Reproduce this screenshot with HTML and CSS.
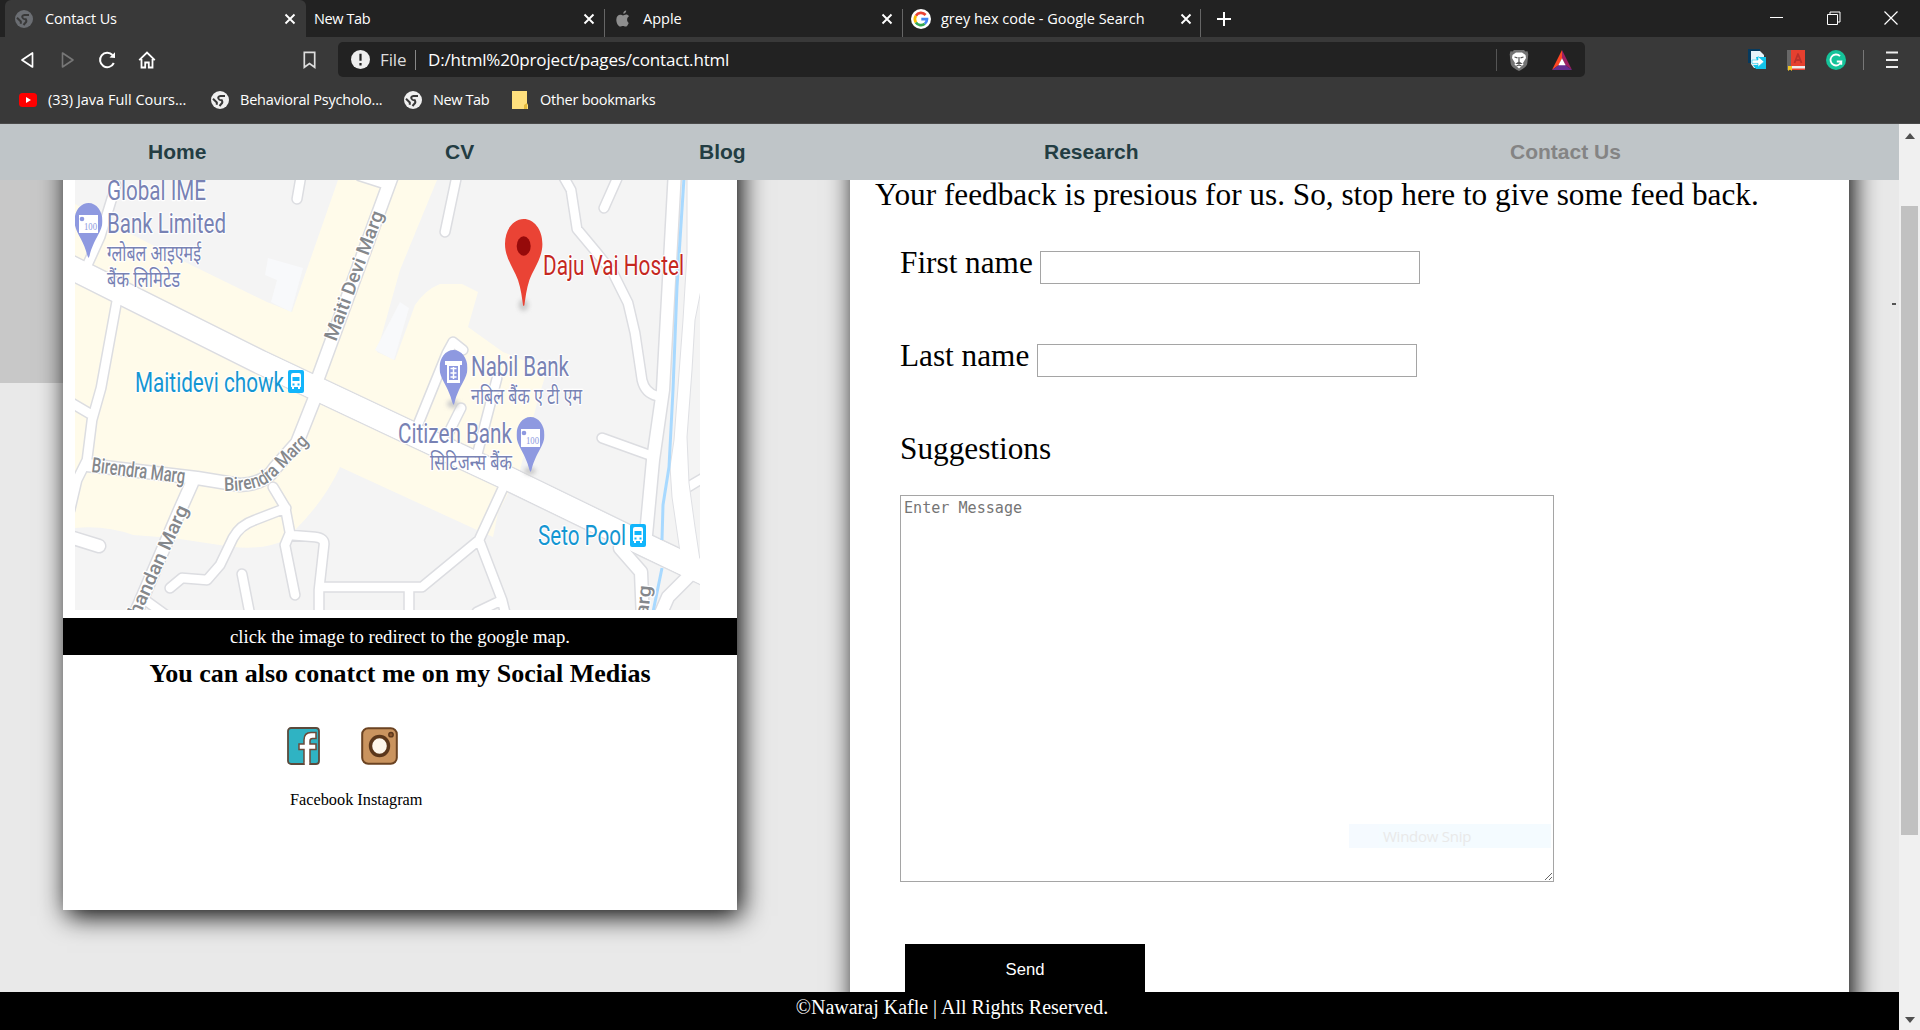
FILE: index.html
```html
<!DOCTYPE html>
<html lang="en">
<head>
<meta charset="utf-8">
<title>Contact Us</title>
<link rel="stylesheet" href="styles.css">
</head>
<body>
<svg class="defs" width="0" height="0" aria-hidden="true">
  <symbol id="globe" viewBox="0 0 18 18"><circle cx="9" cy="9" r="9" fill="currentColor"/><path d="M14 5H9.500Q6.600 5.500 7.400 7.500T10.800 9.300Q12 11.500 10.600 12.600L8.500 15M2 7.800l3.800 3.600v2.300" fill="none" stroke="#393939" stroke-width="2"/></symbol>
  <symbol id="close" viewBox="0 0 12 12"><path d="M1.500 1.500l9 9M10.500 1.500l-9 9" stroke="#fff" stroke-width="1.900" fill="none"/></symbol>
  <symbol id="bus" viewBox="0 0 16 23"><rect width="16" height="23" rx="2" fill="#12b5fb"/><path d="M3 5q0-2 2-2h6q2 0 2 2v12h-1v2h-2v-2H6v2H4v-2H3z" fill="#fff"/><path d="M4.500 7h7v4h-7zM4.500 13.500h2v2h-2zM9.500 13.500h2v2h-2z" fill="#12b5fb"/></symbol>
  <symbol id="pin" viewBox="0 0 28 55"><path d="M14 0C6 0 0 8 0 18c0 11 9 18 13 35l1 2 1-2c4-17 13-24 13-35C28 8 22 0 14 0z" fill="#8e99e0"/></symbol>
  <defs>
    <path id="roads" d="M117 300L101 388 92 420 87 460 77 480 70 510M70 402L92 415M302 170L297 199M458 170L445 232M562 174L571 190 577 229 597 253 613 273 628 303 635 333 642 380Q645 393 657 396M620 172L604 208M602 438L652 456M503 488L479 540 422 587H323M479 540L502 600 507 620M477 612L502 600M409 588V615M273 487L285 507 290 533 285 545 295 595M290 535L315 537Q325 538 324 545L319 590V620M286 508L255 520Q240 525 233 538L220 565 207 580 182 578 170 588M242 574L251 620M463 350L453 342 447 353 419 422M461 408L449 432M497 378L477 455M116 185L100 237 86 268M145 600L170 618M360 176L385 184M688 487L705 477"/>
    <path id="lanes" d="M87 465L197 478 240 485Q265 484 275 468L297 443 320 385M318 378L396 165M192 483L180 510 135 615M70 537L99 546M675 170L663 390 653 460 646 535M620 548L641 572 643 620M690 575L668 597 658 620"/>
    <path id="main" d="M60 262L120 292 260 362 400 428 507 478 647 546 710 576"/>
  </defs>
</svg>

<header class="browser">
  <div class="tabs">
    <div class="tab active"><svg class="fav dim"><use href="#globe"/></svg><span class="title">Contact Us</span><svg class="x"><use href="#close"/></svg></div>
    <div class="tab plain"><span class="title">New Tab</span><svg class="x"><use href="#close"/></svg></div>
    <div class="tab apple"><svg class="fav" viewBox="0 0 18 18"><path d="M12.200.5c.1 1.700-1.300 3.300-2.900 3.300C9.100 2.100 10.600.7 12.200.5zM14.700 12.900c-.9 2.200-1.900 3.700-3.200 3.700-1 0-1.400-.6-2.600-.6s-1.700.6-2.600.6C4.400 16.600 2.300 13 2.300 9.700c0-3.300 2-5 4-5 1.100 0 2 .7 2.700.7.800 0 1.800-.8 3.200-.8 1 0 2.100.5 2.800 1.600-2.700 1.700-2.200 5.400-.3 6.700z" fill="#8e8e8e"/></svg><span class="title">Apple</span><svg class="x"><use href="#close"/></svg></div>
    <div class="tab google"><svg class="fav" viewBox="0 0 20 20"><circle cx="10" cy="10" r="10" fill="#fff"/><g fill="none" stroke-width="2.700"><path d="M14.600 6A6.100 6.100 0 0 0 4.900 6.700" stroke="#ea4335"/><path d="M4.900 6.700a6.100 6.100 0 0 0 0 6.700" stroke="#fbbc05"/><path d="M4.900 13.400a6.100 6.100 0 0 0 8.900 1.400" stroke="#34a853"/><path d="M13.800 14.800A6 6 0 0 0 16 10.200h-5.700" stroke="#4285f4"/></g></svg><span class="title">grey hex code - Google Search</span><svg class="x"><use href="#close"/></svg></div>
    <svg class="plus" viewBox="0 0 14 14"><path d="M7 0v14M0 7h14" stroke="#fff" stroke-width="2"/></svg>
    <div class="window-buttons">
      <svg viewBox="0 0 14 14"><path d="M0 6.500h13" stroke="#fff"/></svg>
      <svg viewBox="0 0 14 14" fill="none" stroke="#fff"><path d="M.5 3.500h10v10H.500zM3 3V1h10v10h-2.500"/></svg>
      <svg viewBox="0 0 14 14"><path d="M.5 .5l13 13M13.500.5l-13 13" stroke="#fff" stroke-width="1.200"/></svg>
    </div>
  </div>
  <div class="toolbar">
    <div class="controls">
      <svg class="i-back" viewBox="0 0 14 18"><path d="M12.500 2v14L2 9z" fill="none" stroke="#fff" stroke-width="1.700" stroke-linejoin="round"/></svg>
      <svg class="i-fwd" viewBox="0 0 14 18"><path d="M1.500 2v14L12 9z" fill="none" stroke="#777" stroke-width="1.600" stroke-linejoin="round"/></svg>
      <svg class="i-reload" viewBox="0 0 18 18"><path d="M14.500 4A7.200 7.200 0 1 0 15.800 12" fill="none" stroke="#fff" stroke-width="2"/><path d="M11.500 6.500l5.500.5V1.200z" fill="#fff"/></svg>
      <svg class="i-home" viewBox="0 0 18 18"><path d="M1.200 9.200L9 1.500l7.800 7.700M3.500 8v8.500h3.700v-5h3.600v5h3.700V8" fill="none" stroke="#fff" stroke-width="1.800"/></svg>
      <svg class="i-mark" viewBox="0 0 13 18"><path d="M1.300 1.300h10.400v15L6.500 12.500l-5.200 3.800z" fill="none" stroke="#ddd" stroke-width="1.700"/></svg>
    </div>
    <div class="address">
      <svg class="info" viewBox="0 0 19 19"><circle cx="9.500" cy="9.500" r="9.500" fill="#eee"/><path d="M9.500 3.800v7M9.500 13v2.400" stroke="#222" stroke-width="2.200"/></svg>
      <span class="scheme">File</span>
      <span class="url">D:/html%20project/pages/contact.html</span>
      <div class="shields">
        <svg viewBox="0 0 20 22"><path d="M5 1h10l1.500 1.500 2-.3.800 3-1 9.300c-.3 3-4.500 5.500-8.300 7.500-3.800-2-8-4.500-8.300-7.500L.7 5.200l.8-3 2 .3z" fill="#737373"/><path d="M7 3.500h6l3.500 2.500.5 3-3 5 .5 1.500-4.500 4-4.500-4L6 14 3 9l.5-3z" fill="#fff"/><path d="M5.500 8l3 .8M14.500 8l-3 .8M10 8v5l-2 1.500h4L10 13M7.500 17l2.500-1 2.500 1" stroke="#555" fill="none" stroke-width="1.200"/></svg>
        <svg viewBox="0 0 22 22"><path d="M11 0L0 22l7.500-5.500L11 9z" fill="#ff4724"/><path d="M11 0l11 22-7.500-5.500L11 9z" fill="#9e1f63"/><path d="M0 22h22l-7.500-5.500h-7z" fill="#662d91"/><path d="M11 9l4 7.800H7z" fill="#fff"/></svg>
      </div>
    </div>
    <div class="extensions">
      <svg viewBox="0 0 18 22"><path d="M0 0h12v3L6 14H0z" fill="#063a5e"/><path d="M3 2h9l4 4v13H6l-3-4z" fill="#e9f4fa"/><path d="M8 8h10v12H8l-3-4h5z" fill="#12c4ea"/><path d="M4 11h6V7.500l6 5.200-6 5.200v-3.500H4z" fill="#fff" stroke="#12c4ea" stroke-width=".6"/></svg>
      <svg viewBox="0 0 18 22"><path d="M0 1h18v20H0z" fill="#e5402f"/><path d="M0 1h4v20H0z" fill="#686868"/><path d="M4 17h14v2.500H4z" fill="#eee"/><path d="M1 17h4v5l-2-1.500L1 22z" fill="#f3c623"/><path d="M7.500 14L11 5l3.500 9M9 11h4" stroke="#b9302a" fill="none" stroke-width="1.800" stroke-linejoin="round"/></svg>
      <svg class="gram" viewBox="0 0 20 20"><circle cx="10" cy="10" r="10" fill="#15c39a"/><path d="M14 6.200A5.500 5.500 0 1 0 15.300 11.500H10.800M15.300 11v3.800" fill="none" stroke="#fff" stroke-width="1.800"/></svg>
      <i class="divider"></i>
      <svg class="menu" viewBox="0 0 12 18"><path d="M0 1.500h12M0 9h12M0 16h12" stroke="#eee" stroke-width="2"/></svg>
    </div>
  </div>
  <div class="bookmarks">
    <a><svg class="yt" viewBox="0 0 18 14"><rect width="18" height="14" rx="3.500" fill="#f00"/><path d="M7 4v6l5-3z" fill="#fff"/></svg><span class="b1">(33) Java Full Cours...</span></a>
    <a><svg class="fav"><use href="#globe"/></svg><span class="b2">Behavioral Psycholo...</span></a>
    <a><svg class="fav"><use href="#globe"/></svg><span class="b3">New Tab</span></a>
    <a><svg class="folder" viewBox="0 0 16 18"><path d="M0 0h15v12l1 2v4H0z" fill="#ffe07d"/><path d="M12 18v-4l3-2v6z" fill="#e3b93d"/></svg><span class="b4">Other bookmarks</span></a>
  </div>
</header>

<div class="viewport">
  <div class="page">
    <nav class="nav"><a>Home</a><a>CV</a><a>Blog</a><a>Research</a><a class="current">Contact Us</a></nav>
    <main class="content">
      <section class="card location">
        <svg class="map" viewBox="75 180 625 430">
          <rect x="75" y="180" width="625" height="430" fill="#f4f4f4"/>
          <path fill="#fffbea" d="M75 204L133 235 187 263 267 302 292 312 338 180H437L400 270 377 352 395 360 415 305 Q425 290 440 284H462L478 292 468 327 503 352 547 370 537 403 520 470 498 513 493 537 477 530 340 467Q325 500 295 530L285 540 Q265 550 233 547L173 538 133 535 Q105 525 75 528z"/>
          <path fill="#f8f9fb" d="M268 258l35 10-12 44-20-10 6-22-12-5zM375 350l25-48 9 6-15 52z"/>
          <g class="casing"><use href="#roads" class="narrow"/><use href="#lanes" class="medium"/><use href="#main" class="wide"/></g>
          <g class="fill"><use href="#roads" class="narrow"/><use href="#lanes" class="medium"/><use href="#main" class="wide"/></g>
          <path d="M687 170V253L683 320 674 440 670 467 672 497 680 552 710 590V590L700 560 695 527 689 483 687 437 692 370 695 320 701 290V170z" fill="#fff" stroke="#dfe0e4"/>
          <g class="fill"><use href="#main" class="wide"/></g>
          <path d="M684 178L677 287 673 390 669 467 663 505 662 540M662 568L653 612" fill="none" stroke="#a8d9ff" stroke-width="3"/>
          <g class="ground" fill="#ccc"><ellipse cx="523.500" cy="305" rx="5" ry="6"/><ellipse cx="453" cy="404" rx="6" ry="4"/><ellipse cx="530" cy="471" rx="6" ry="4"/></g>
          <use href="#pin" x="74.500" y="203" width="28" height="55"/>
          <use href="#pin" x="439.500" y="350" width="28" height="55"/>
          <use href="#pin" x="516.500" y="417" width="28" height="55"/>
          <path d="M79 215h19v18H79zM521 429h19v18h-19zM445 361h17v4h-2v18h-13v-18h-2z" fill="#fff"/>
          <path d="M449 366h9v14h-9z" fill="#8e99e0"/>
          <path d="M450.500 368.500h6M450.500 373h6M450.500 377h6M453.500 367v12" stroke="#fff" stroke-width="1.500"/>
          <circle cx="82" cy="219" r="2.300" fill="#8e99e0"/><circle cx="524" cy="433" r="2.300" fill="#8e99e0"/>
          <text class="hundred" x="84" y="230" textLength="13" lengthAdjust="spacingAndGlyphs">100</text>
          <text class="hundred" x="526" y="444" textLength="13" lengthAdjust="spacingAndGlyphs">100</text>
          <path d="M523.700 219c-10 0-18.700 10-18.700 25 0 14 9 25 13 36 3 9 4 18 5 25q.7 2 1.400 0c1-7 2-16 5-25 4-11 13-22 13-36 0-15-8.700-25-18.700-25z" fill="#ea4335"/>
          <ellipse cx="523.700" cy="246" rx="7" ry="9.700" fill="#960a0a"/>
          <g class="bank">
            <text x="107" y="200" textLength="99" lengthAdjust="spacingAndGlyphs">Global IME</text>
            <text x="107" y="233" textLength="119" lengthAdjust="spacingAndGlyphs">Bank Limited</text>
            <text class="deva" x="107" y="261" textLength="94" lengthAdjust="spacingAndGlyphs">ग्लोबल आइएमई</text>
            <text class="deva" x="107" y="287" textLength="73" lengthAdjust="spacingAndGlyphs">बैंक लिमिटेड</text>
            <text x="471" y="376" textLength="98" lengthAdjust="spacingAndGlyphs">Nabil Bank</text>
            <text class="deva" x="471" y="404" textLength="111" lengthAdjust="spacingAndGlyphs">नबिल बैंक ए टी एम</text>
            <text x="398" y="443" textLength="114" lengthAdjust="spacingAndGlyphs">Citizen Bank</text>
            <text class="deva" x="430" y="470" textLength="82" lengthAdjust="spacingAndGlyphs">सिटिजन्स बैंक</text>
          </g>
          <text class="hostel" x="543" y="275" textLength="141" lengthAdjust="spacingAndGlyphs">Daju Vai Hostel</text>
          <g class="stop">
            <text x="135" y="392" textLength="149" lengthAdjust="spacingAndGlyphs">Maitidevi chowk</text>
            <text x="538" y="545" textLength="88" lengthAdjust="spacingAndGlyphs">Seto Pool</text>
          </g>
          <use href="#bus" x="288" y="370" width="16" height="23"/>
          <use href="#bus" x="630" y="524" width="16" height="23"/>
          <g class="street">
            <text transform="translate(91 472) rotate(7)" textLength="94" lengthAdjust="spacingAndGlyphs">Birendra Marg</text>
            <path id="curve" d="M224 491Q262 491 275 477L316 435" fill="none" stroke="none"/>
            <text class="tight"><textPath href="#curve" textLength="103" lengthAdjust="spacingAndGlyphs">Birendra Marg</textPath></text>
            <text class="tight" transform="translate(336 342) rotate(-69.500)" textLength="137" lengthAdjust="spacingAndGlyphs">Maiti Devi Marg</text>
            <text class="tight" transform="translate(134 629) rotate(-65.500)" textLength="132" lengthAdjust="spacingAndGlyphs">Chandan Marg</text>
            <text class="tight" transform="translate(648 616) rotate(-84)" textLength="30" lengthAdjust="spacingAndGlyphs">arg</text>
          </g>
        </svg>
        <p class="caption">click the image to redirect to the google map.</p>
        <h2>You can also conatct me on my Social Medias</h2>
        <div class="social">
          <svg class="fb" viewBox="0 0 33 38"><rect x="1" y="1" width="31" height="36" rx="3" fill="#2fb3c3" stroke="#5b4a3c" stroke-width="1.800"/><path d="M17 37V22.500h-5V17h5v-4q0-7.500 7-7.500h5v6h-3.500q-2.500 0-2.500 2.500v3h6v5.500h-6V37z" fill="#fff" stroke="#6b4a3a" stroke-width="1.500"/><path d="M17.800 35.500h4.400V38h-4.400z" fill="#fff"/></svg>
          <svg class="ig" viewBox="0 0 37 38"><rect x="1.200" y="1.200" width="34.600" height="35.600" rx="6" fill="#ca945f" stroke="#6b4322" stroke-width="2"/><ellipse cx="18.500" cy="19" rx="9" ry="9.500" fill="#fdf6ea" stroke="#5b371b" stroke-width="3.400"/><circle cx="30" cy="7.700" r="2.200" fill="#8a552c" stroke="#5b371b" stroke-width="1.400"/></svg>
        </div>
        <p class="names">Facebook Instagram</p>
      </section>
      <section class="card feedback">
        <p class="lead">Your feedback is presious for us. So, stop here to give some feed back.</p>
        <form>
          <div class="row"><label class="first">First name</label><input type="text"></div>
          <div class="row"><label class="last">Last name</label><input type="text"></div>
          <div class="row"><label>Suggestions</label></div>
          <div class="message"><textarea placeholder="Enter Message"></textarea><span class="snip">Window Snip</span></div>
          <button type="button">Send</button>
        </form>
      </section>
      <i class="speck"></i>
    </main>
    <footer class="footer">©Nawaraj Kafle | All Rights Reserved.</footer>
  </div>
  <div class="scrollbar">
    <svg viewBox="0 0 10 6"><path d="M0 6l5-6 5 6z" fill="#505050"/></svg>
    <div class="thumb"></div>
    <svg viewBox="0 0 10 6"><path d="M0 0l5 6 5-6z" fill="#505050"/></svg>
  </div>
</div>
</body>
</html>
```

FILE: styles.css
```css
* { box-sizing: border-box; }
body { margin: 0; width: 1920px; height: 1030px; overflow: hidden; display: flex; flex-direction: column; font-family: "Liberation Serif", "Times New Roman", serif; color: #000; }
svg { display: block; flex: none; }
.defs { position: absolute; }
p, h2 { margin: 0; }

/* browser chrome */
.browser { height: 124px; background: #393939; color: #fff; font: 15px/20px "Open Sans", "Segoe UI", sans-serif; display: flex; flex-direction: column; white-space: nowrap; }
.tabs { height: 37px; background: #222; display: flex; padding-left: 5px; }
.tab { width: 298px; height: 37px; display: flex; align-items: center; padding: 0 9px 0 10px; }
.tab .title { flex: 1; font-size: 14.500px; letter-spacing: 0; }
.tab.active { width: 301px; padding-right: 10px; background: #393939; border-radius: 6px 6px 0 0; }
.tab.active .title { letter-spacing: -.15px; }
.tab.plain { padding-left: 8px; }
.tab.plain .title { letter-spacing: -.4px; }
.tab.apple, .tab.google { background: linear-gradient(#666, #666) 0 9px / 1px 28px no-repeat; }
.tab.google { width: 299px; background: linear-gradient(#666, #666) 0 9px / 1px 28px no-repeat, linear-gradient(#666, #666) 100% 9px / 1px 28px no-repeat; }
.fav { width: 18px; height: 18px; margin-right: 11px; color: #f0f0f0; }
.dim { color: #6b6e73; margin-right: 12px; }
.google .fav { width: 20px; height: 20px; margin: 0 10px 0 -1px; }
.x { width: 12px; height: 12px; }
.plus { width: 14px; height: 14px; margin: 12px 0 0 16px; }
.window-buttons { margin-left: auto; display: flex; gap: 43px; padding: 11px 22px 0 0; }
.window-buttons svg { width: 14px; height: 14px; }
.toolbar { height: 45px; padding-top: 5px; display: flex; }
.controls { width: 338px; display: flex; align-items: center; padding-left: 20px; height: 35px; }
.i-back, .i-fwd { width: 14px; height: 18px; }
.i-fwd { margin-left: 27px; }
.i-reload { width: 18px; height: 18px; margin-left: 23px; }
.i-home { width: 18px; height: 18px; margin-left: 22px; }
.i-mark { width: 13px; height: 18px; margin-left: 147px; }
.address { width: 1247px; height: 35px; background: #222; border-radius: 5px; display: flex; align-items: center; padding: 0 12px 0 13px; font-size: 17px; }
.info { width: 19px; height: 19px; }
.scheme { width: 36px; margin-left: 10px; border-right: 1px solid #888; color: #ddd; letter-spacing: -.1px; }
.url { margin-left: 12px; letter-spacing: -.17px; }
.shields { margin-left: auto; border-left: 1px solid #555; display: flex; gap: 22px; padding-left: 12px; }
.shields svg { width: 20px; height: 22px; }
.shields svg + svg { width: 22px; height: 20px; margin-top: 1px; }
.extensions { display: flex; align-items: center; margin-left: 163px; height: 35px; }
.extensions svg { width: 18px; height: 22px; }
.extensions svg + svg { margin-left: 21px; }
.extensions .gram { width: 20px; height: 20px; }
.divider { width: 1px; height: 20px; margin: 0 22px 0 17px; background: #777; }
.extensions .menu { width: 12px; height: 18px; margin-left: 0; }
.bookmarks { height: 42px; display: flex; padding: 8px 0 0 19px; align-items: flex-start; border-bottom: 1px solid #4a4a4a; font-size: 14.500px; }
.bookmarks a { display: flex; align-items: center; height: 20px; }
.yt { width: 18px; height: 14px; margin-right: 11px; }
.bookmarks .fav { margin-right: 11px; }
.folder { width: 16px; height: 18px; margin-right: 12px; }
.b1 { width: 163px; letter-spacing: 0; }
.b2 { width: 164px; letter-spacing: -.2px; }
.b3 { width: 79px; letter-spacing: -.4px; }
.b4 { letter-spacing: -.25px; }

/* page */
.viewport { flex: 1; display: flex; height: 906px; }
.page { width: 1899px; display: flex; flex-direction: column; background: #e9e9e9; }
.nav { height: 56px; background: #bfc5c8; display: grid; grid-template-columns: 297px 254px 345px 466px 1fr; padding-left: 148px; font: bold 21px/56px "Liberation Sans", Arial, sans-serif; color: #233d43; }
.nav .current { color: #848484; }
.content { height: 812px; overflow: hidden; position: relative; display: flex; align-items: flex-start; gap: 113px; padding-left: 63px; background: linear-gradient(#c8c8c8, #c8c8c8) 0 0 / 400px 203px no-repeat; }
.card { background: #fff; margin-top: -60px; padding-top: 60px; box-shadow: 4px 6px 25px #000; }
.location { width: 674px; height: 790px; text-align: center; }
.map { width: 625px; height: 430px; margin-left: 12px; overflow: hidden; }
.casing, .fill { fill: none; stroke-linecap: round; stroke-linejoin: round; }
.casing { stroke: #dcdde1; }
.casing .narrow { stroke-width: 11.500px; }
.casing .medium { stroke-width: 15px; }
.casing .wide { stroke-width: 25.500px; }
.fill { stroke: #fff; }
.fill .narrow { stroke-width: 8.500px; }
.fill .medium { stroke-width: 12px; }
.fill .wide { stroke-width: 22.500px; }
.ground { filter: blur(2px); }
.map text { paint-order: stroke; stroke: #fff; stroke-width: 2.500px; stroke-linejoin: round; font-family: Roboto, sans-serif; font-size: 28px; }
.map .bank text { fill: #7882b4; }
.map .bank .deva { font-family: "Noto Sans Devanagari", "Noto Sans", sans-serif; font-size: 22px; }
.map .hostel { fill: #c5281f; }
.map .stop text { fill: #1496d2; }
.map .street text { fill: #85888c; font-size: 21px; font-weight: 500; }
.map .street .tight { font-size: 19px; }
.map .hundred { font-family: "Liberation Serif", serif; font-size: 11px; fill: #8e99e0; stroke: none; }
.caption { margin-top: 8px; height: 37px; background: #000; color: #fff; font-size: 18.750px; line-height: 38px; }
h2 { font-size: 26px; line-height: 38px; }
.social { display: flex; gap: 41px; padding: 34px 0 0 224px; }
.fb { width: 33px; height: 38px; }
.ig { width: 37px; height: 38px; }
.names { text-align: left; padding-left: 227px; font-size: 16.300px; line-height: 20px; margin-top: 25px; }
.feedback { width: 999px; height: 990px; font-size: 31.250px; }
.lead { padding-left: 25px; line-height: 30px; height: 36px; white-space: nowrap; }
form { padding-left: 50px; display: flex; flex-direction: column; align-items: flex-start; }
.row { height: 93px; display: flex; align-items: center; }
.first { width: 140px; }
.last { width: 137px; }
label { white-space: nowrap; line-height: 36px; }
input { width: 380px; height: 33px; margin: 10px 0 0; border: 1px solid #a5a5a5; background: #fff; }
.message { width: 654px; height: 387px; position: relative; }
textarea { display: block; width: 654px; height: 387px; border: 1px solid #a5a5a5; padding: 3px; margin: 0; font: 15.100px/18px "DejaVu Sans Mono", monospace; background: #fff; }
textarea::placeholder { color: #757575; }
.snip { position: absolute; left: 449px; top: 329px; width: 202px; height: 24px; padding-left: 34px; background: linear-gradient(90deg, #f5faff 30px, #f4fbff 30px); color: #e9e9e9; font: 15px/25px "Open Sans", sans-serif; letter-spacing: -.25px; }
button { margin: 62px 0 0 5px; width: 240px; height: 50px; border: 0; padding: 2px 0 0; background: #000; color: #fff; font: 16.670px "Liberation Sans", Arial, sans-serif; }
.speck { position: absolute; left: 1892px; top: 123px; width: 4px; height: 2px; background: #555; }
.footer { height: 38px; background: #000; color: #fff; font-size: 20px; line-height: 31px; text-align: center; padding-left: 5px; }
.scrollbar { width: 21px; background: #f0f0f0; display: flex; flex-direction: column; align-items: center; padding: 9px 0 7px; }
.scrollbar svg { width: 10px; height: 6px; }
.thumb { width: 17px; height: 629px; margin: 67px 0 auto; background: #c1c1c1; }
```
